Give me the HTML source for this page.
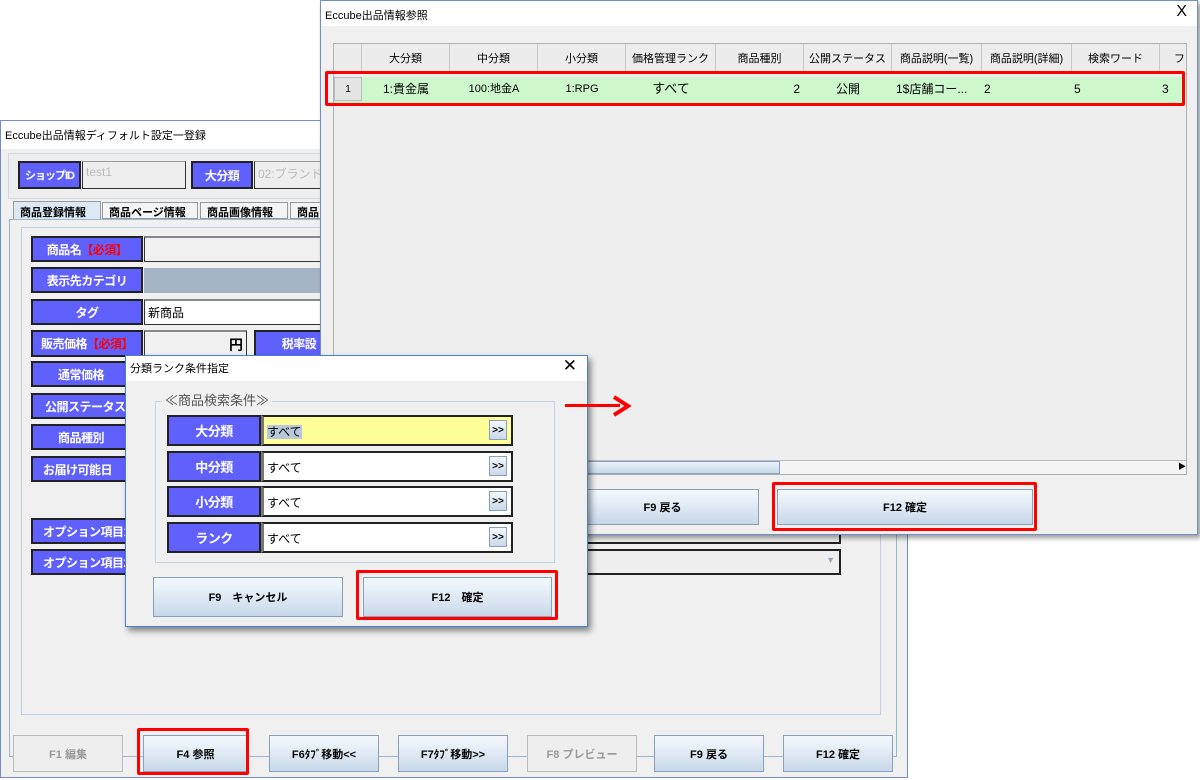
<!DOCTYPE html>
<html><head><meta charset="utf-8"><style>
*{box-sizing:border-box;margin:0;padding:0}
body{width:1200px;height:780px;background:#fff;position:relative;overflow:hidden;font-family:"Liberation Sans","Noto Sans CJK JP",sans-serif;font-size:12px;color:#000}
.a{position:absolute}
.win{position:absolute;background:#f0f0f0;border:1px solid #6f8fc8}
.tb{position:absolute;left:0;top:0;right:0;background:#fff;font-size:11px;padding:6px 4px}
.lab{position:absolute;background:#6060ff;color:#fff;border:2px solid #222;font-weight:bold;font-size:12px;letter-spacing:-0.5px;text-align:center;display:flex;align-items:center;justify-content:center;white-space:nowrap;overflow:hidden}
.inp{position:absolute;background:#fff;border:1px solid #333;border-top:2px solid #888;font-size:12px;padding:3px 3px;white-space:nowrap;overflow:hidden}
.btn{position:absolute;border:1px solid #8aa0b8;background:linear-gradient(#f4f8fc,#dfe9f4 50%,#c7d8ea);font-size:11px;font-weight:bold;display:flex;align-items:center;justify-content:center;white-space:nowrap}
.red{position:absolute;border:3px solid #f00;border-radius:2px}
.hd{position:absolute;top:0;height:28px;border-right:1px solid #c8c8c8;text-align:center;line-height:30px;font-size:11px;background:#ececec}
.cl{position:absolute;top:0;height:24px;line-height:24px;font-size:12px}
</style></head><body>

<!-- left window -->
<div class="win" style="left:0;top:120px;width:908px;height:658px">
 <div class="tb" style="height:28px">Eccube出品情報ディフォルト設定一登録</div>
 <div class="a" style="left:7px;top:32px;width:900px;height:46px;border:1px solid #d0d8e0;background:#eee"></div>
 <div class="lab" style="left:17px;top:40px;width:63px;height:28px;font-size:11px;letter-spacing:-1px">ショップID</div>
 <div class="inp" style="left:81px;top:40px;width:104px;height:28px;background:#eee;color:#bbb;border-top:1px solid #999">test1</div>
 <div class="lab" style="left:190px;top:40px;width:62px;height:28px">大分類</div>
 <div class="inp" style="left:253px;top:40px;width:80px;height:28px;background:#eee;color:#bbb;border-top:1px solid #999">02:ブランド</div>
 <div class="a" style="left:12px;top:80px;width:88px;height:19px;background:#dce8f4;border:1px solid #999;font-size:11px;font-weight:bold;padding:2px 6px">商品登録情報</div>
 <div class="a" style="left:101px;top:81px;width:96px;height:17px;background:#f4f4f4;border:1px solid #999;font-size:11px;font-weight:bold;padding:1px 6px">商品ページ情報</div>
 <div class="a" style="left:199px;top:81px;width:88px;height:17px;background:#f4f4f4;border:1px solid #999;font-size:11px;font-weight:bold;padding:1px 6px">商品画像情報</div>
 <div class="a" style="left:289px;top:81px;width:40px;height:17px;background:#f4f4f4;border:1px solid #999;font-size:11px;font-weight:bold;padding:1px 6px">商品</div>
 <div class="a" style="left:8px;top:98px;width:888px;height:538px;border:1px solid #9cb4d4"></div>
 <div class="a" style="left:20px;top:106px;width:860px;height:488px;border:1px solid #bcd0e8"></div>
 <div class="lab" style="left:30px;top:115px;width:112px;height:26px">商品名<span style="color:#f00">【必須】</span></div>
 <div class="inp" style="left:143px;top:115px;width:200px;height:26px;background:#f0f0f0"></div>
 <div class="lab" style="left:30px;top:146px;width:112px;height:26px">表示先カテゴリ</div>
 <div class="a" style="left:143px;top:147px;width:200px;height:25px;background:#a4b4c4"></div>
 <div class="lab" style="left:30px;top:178px;width:112px;height:26px">タグ</div>
 <div class="inp" style="left:143px;top:178px;width:200px;height:26px">新商品</div>
 <div class="lab" style="left:30px;top:209px;width:112px;height:27px">販売価格<span style="color:#f00">【必須】</span></div>
 <div class="inp" style="left:143px;top:209px;width:103px;height:27px;background:#f0f0f0;text-align:right;font-size:14px;font-weight:bold">円</div>
 <div class="lab" style="left:253px;top:209px;width:90px;height:27px">税率設</div>
 <div class="lab" style="left:30px;top:240px;width:100px;height:26px">通常価格</div>
 <div class="lab" style="left:30px;top:272px;width:100px;height:26px;justify-content:flex-start;padding-left:12px">公開ステータス</div>
 <div class="lab" style="left:30px;top:303px;width:100px;height:26px">商品種別</div>
 <div class="lab" style="left:30px;top:335px;width:100px;height:26px;justify-content:flex-start;padding-left:10px">お届け可能日</div>
 <div class="lab" style="left:30px;top:397px;width:100px;height:26px;justify-content:flex-start;padding-left:10px">オプション項目1</div>
 <div class="lab" style="left:30px;top:428px;width:100px;height:26px;justify-content:flex-start;padding-left:10px">オプション項目2</div>
 <div class="inp" style="left:560px;top:397px;width:280px;height:26px;background:#eee;border:2px solid #222"></div>
 <div class="inp" style="left:560px;top:428px;width:280px;height:26px;background:#eee;border:2px solid #222"><span style="position:absolute;right:4px;top:4px;color:#9ab;font-size:9px">▼</span></div>
 <div class="btn" style="left:12px;top:614px;width:110px;height:37px;background:#eee;color:#999;border-color:#bbb">F1 編集</div>
 <div class="btn" style="left:142px;top:614px;width:105px;height:37px">F4 参照</div>
 <div class="btn" style="left:268px;top:614px;width:110px;height:37px">F6ﾀﾌﾞ移動&lt;&lt;</div>
 <div class="btn" style="left:397px;top:614px;width:110px;height:37px">F7ﾀﾌﾞ移動&gt;&gt;</div>
 <div class="btn" style="left:526px;top:614px;width:110px;height:37px;background:#eee;color:#999;border-color:#bbb">F8 プレビュー</div>
 <div class="btn" style="left:653px;top:614px;width:110px;height:37px">F9 戻る</div>
 <div class="btn" style="left:782px;top:614px;width:110px;height:37px">F12 確定</div>
</div>
<div class="red" style="left:137px;top:728px;width:112px;height:47px"></div>

<!-- right window -->
<div class="win" style="left:320px;top:0;width:878px;height:535px;box-shadow:3px 3px 5px rgba(0,0,0,.4)">
 <div class="tb" style="height:25px">Eccube出品情報参照<span style="position:absolute;right:10px;top:2px;font-size:16px">X</span></div>
 <div class="a" style="left:12px;top:42px;width:854px;height:432px;background:#eee;border:1px solid #b0b0b0;overflow:hidden">
  <div class="a" style="left:0;top:0;width:854px;height:30px;background:#ececec;border-bottom:1px solid #ccc">
   <div class="hd" style="left:0;width:28px"></div>
   <div class="hd" style="left:28px;width:88px">大分類</div>
   <div class="hd" style="left:116px;width:88px">中分類</div>
   <div class="hd" style="left:204px;width:88px">小分類</div>
   <div class="hd" style="left:292px;width:90px">価格管理ランク</div>
   <div class="hd" style="left:382px;width:88px">商品種別</div>
   <div class="hd" style="left:470px;width:88px">公開ステータス</div>
   <div class="hd" style="left:558px;width:90px">商品説明(一覧)</div>
   <div class="hd" style="left:648px;width:90px">商品説明(詳細)</div>
   <div class="hd" style="left:738px;width:88px">検索ワード</div>
   <div class="hd" style="left:826px;width:40px">フ</div>
  </div>
  <div class="a" style="left:0;top:33px;width:854px;height:26px;background:#ccf8cc">
   <div class="cl" style="left:0;width:28px;background:#e4e4e4;text-align:center;border:1px solid #bbb;font-size:10px">1</div>
   <div class="cl" style="left:28px;width:88px;text-align:center">1:貴金属</div>
   <div class="cl" style="left:116px;width:88px;text-align:center;font-size:11px">100:地金A</div>
   <div class="cl" style="left:204px;width:88px;text-align:center;font-size:11px">1:RPG</div>
   <div class="cl" style="left:292px;width:90px;text-align:center;font-size:13px">すべて</div>
   <div class="cl" style="left:382px;width:84px;text-align:right">2</div>
   <div class="cl" style="left:470px;width:88px;text-align:center">公開</div>
   <div class="cl" style="left:562px;width:86px">1$店舗コー...</div>
   <div class="cl" style="left:650px;width:86px">2</div>
   <div class="cl" style="left:740px">5</div>
   <div class="cl" style="left:828px">3</div>
  </div>
  <div class="a" style="left:0;top:416px;width:854px;height:14px;background:#f4f4f4;border-top:1px solid #bbb">
   <div class="a" style="left:0;top:0;width:446px;height:13px;background:linear-gradient(#e8f0f8,#c8daec);border:1px solid #8aa0c0"></div>
   <div class="a" style="right:0;top:0;width:12px;height:13px;font-size:8px;text-align:center">▶</div>
  </div>
 </div>
 <div class="btn" style="left:245px;top:488px;width:193px;height:36px">F9 戻る</div>
 <div class="btn" style="left:456px;top:488px;width:256px;height:36px">F12 確定</div>
</div>
<div class="red" style="left:325px;top:71px;width:860px;height:35px"></div>
<div class="red" style="left:772px;top:482px;width:265px;height:49px"></div>

<!-- dialog -->
<div class="win" style="left:125px;top:355px;width:463px;height:272px;box-shadow:3px 4px 6px rgba(0,0,0,.45);border-color:#4a80d0">
 <div class="tb" style="height:25px;padding:4px 4px">分類ランク条件指定<span style="position:absolute;right:10px;top:0;font-size:17px">✕</span></div>
 <div class="a" style="left:29px;top:45px;width:400px;height:162px;border:1px solid #c4d4e4"></div>
 <div class="a" style="left:36px;top:34px;background:#f0f0f0;padding:0 3px;font-size:13px;color:#555">≪商品検索条件≫</div>
 <div class="lab" style="left:41px;top:59px;width:94px;height:31px;font-size:13px">大分類</div>
 <div class="inp" style="left:135px;top:59px;width:252px;height:31px;background:#ffff99;border:2px solid #222;border-left:3px solid #777;padding-top:6px"><span style="background:#b8c8dc">すべて</span></div>
 <div class="lab" style="left:41px;top:95px;width:94px;height:31px;font-size:13px">中分類</div>
 <div class="inp" style="left:135px;top:95px;width:252px;height:31px;border:2px solid #222;border-left:3px solid #777;padding-top:6px">すべて</div>
 <div class="lab" style="left:41px;top:130px;width:94px;height:31px;font-size:13px">小分類</div>
 <div class="inp" style="left:135px;top:130px;width:252px;height:31px;border:2px solid #222;border-left:3px solid #777;padding-top:6px">すべて</div>
 <div class="lab" style="left:41px;top:166px;width:94px;height:31px;font-size:13px">ランク</div>
 <div class="inp" style="left:135px;top:166px;width:252px;height:31px;border:2px solid #222;border-left:3px solid #777;padding-top:6px">すべて</div>
 <div class="btn" style="left:363px;top:64px;width:18px;height:20px;font-size:10px">&gt;&gt;</div>
 <div class="btn" style="left:363px;top:100px;width:18px;height:20px;font-size:10px">&gt;&gt;</div>
 <div class="btn" style="left:363px;top:135px;width:18px;height:20px;font-size:10px">&gt;&gt;</div>
 <div class="btn" style="left:363px;top:171px;width:18px;height:20px;font-size:10px">&gt;&gt;</div>
 <div class="btn" style="left:27px;top:221px;width:190px;height:40px">F9　キャンセル</div>
 <div class="btn" style="left:237px;top:221px;width:189px;height:40px">F12　確定</div>
</div>
<div class="red" style="left:356px;top:570px;width:202px;height:50px"></div>

<!-- arrow -->
<div class="a" style="left:565px;top:404px;width:55px;height:3px;background:#f00"></div>
<svg class="a" style="left:610px;top:395px" width="24" height="22"><path d="M4 2 L18 11 L4 20" fill="none" stroke="#f00" stroke-width="4"/></svg>
</body></html>
